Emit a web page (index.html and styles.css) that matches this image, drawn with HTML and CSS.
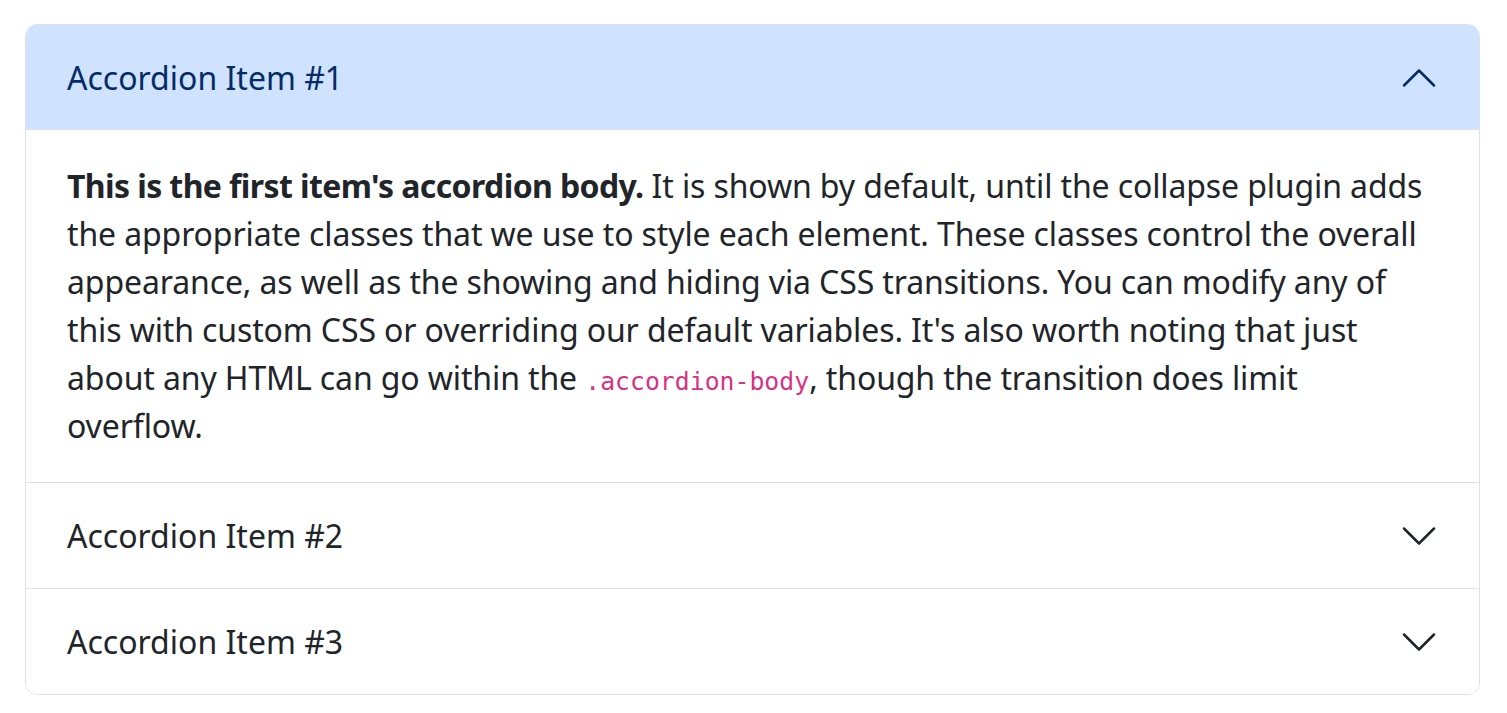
FILE: index.html
```html
<!DOCTYPE html>
<html lang="en">
<head>
<meta charset="utf-8">
<title>Accordion</title>
<link rel="stylesheet" href="styles.css">
</head>
<body>
<div class="page">
  <div class="accordion">
    <div class="accordion-item">
      <h2 class="accordion-header">
        <button class="accordion-button active" type="button">
          <span class="label">Accordion Item #1</span>
          <svg class="chev" viewBox="0 0 16 16" fill="none" stroke="currentColor" stroke-linecap="round" stroke-linejoin="round"><path d="M2 11L8 5L14 11"/></svg>
        </button>
      </h2>
      <div class="accordion-body">
        <strong>This is the first item's accordion body.</strong> It is shown by default, until the collapse plugin adds the appropriate classes that we use to style each element. These classes control the overall appearance, as well as the showing and hiding via CSS transitions. You can modify any of this with custom CSS or overriding our default variables. It's also worth noting that just about any HTML can go within the <code>.accordion-body</code>, though the transition does limit overflow.
      </div>
    </div>
    <div class="accordion-item">
      <h2 class="accordion-header">
        <button class="accordion-button" type="button">
          <span class="label">Accordion Item #2</span>
          <svg class="chev" viewBox="0 0 16 16" fill="none" stroke="currentColor" stroke-linecap="round" stroke-linejoin="round"><path d="M2 5L8 11L14 5"/></svg>
        </button>
      </h2>
    </div>
    <div class="accordion-item">
      <h2 class="accordion-header">
        <button class="accordion-button" type="button">
          <span class="label">Accordion Item #3</span>
          <svg class="chev" viewBox="0 0 16 16" fill="none" stroke="currentColor" stroke-linecap="round" stroke-linejoin="round"><path d="M2 5L8 11L14 5"/></svg>
        </button>
      </h2>
    </div>
  </div>
</div>
</body>
</html>
```
FILE: styles.css
```css
html, body {
  margin: 0;
  padding: 0;
  background: #fff;
}
.page {
  padding: 24px 27px 0 25px;
  font-family: "Noto Sans", sans-serif;
  font-size: 32px;
  line-height: 48px;
  color: #212529;
}
.accordion {
  border: 1px solid #dee2e6;
  border-radius: 12px;
  overflow: hidden;
}
.accordion-item + .accordion-item {
  border-top: 1px solid #dee2e6;
}
.accordion-header {
  margin: 0;
  font: inherit;
}
.accordion-button {
  display: flex;
  align-items: center;
  width: 100%;
  margin: 0;
  padding: 29px 40px 28px 41px;
  border: 0;
  background: #fff;
  color: #212529;
  font: inherit;
  text-align: left;
  cursor: pointer;
}
.accordion-button.active {
  background: #cfe2ff;
  color: #052c65;
  box-shadow: inset 0 -1px 0 #dee2e6;
}
.label {
  flex: 1;
}
.chev {
  flex: 0 0 40px;
  width: 40px;
  height: 40px;
  stroke-width: 1;
}
.accordion-body {
  padding: 32px 40px 32px 41px;
  letter-spacing: -0.12px;
}
.accordion-body strong {
  font-weight: 700;
  letter-spacing: -0.6px;
}
code {
  font-family: "DejaVu Sans Mono", monospace;
  font-size: 24.8px;
  line-height: 0;
  letter-spacing: 0;
  color: #d63384;
}
```
